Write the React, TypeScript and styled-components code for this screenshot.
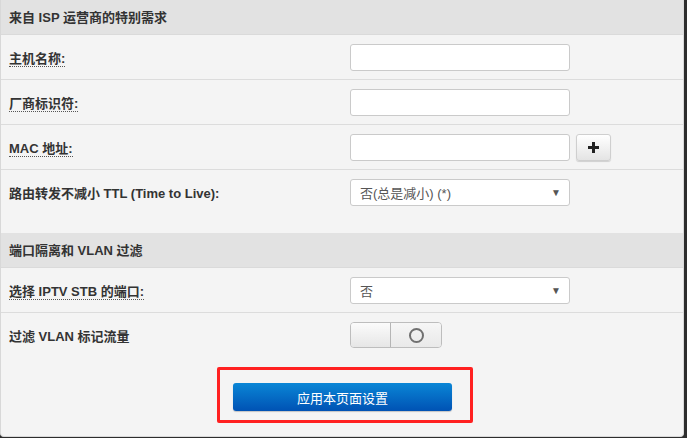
import React from "react";
import styled, { createGlobalStyle } from "styled-components";

const Global = createGlobalStyle`
  html, body { margin: 0; padding: 0; background: #2d2d2d; }
  body { font-family: "Liberation Sans", "Noto Sans CJK SC", sans-serif; font-size: 13px; color: #333; }
`;

const Panel = styled.div`
  width: 684px;
  height: 437px;
  box-sizing: border-box;
  background: #f4f4f4;
  border: 1px solid #d8d8d8;
  border-top: none;
  border-radius: 0 0 4px 4px;
  overflow: hidden;
`;

const SectionHeader = styled.div`
  height: 35px;
  box-sizing: border-box;
  display: flex;
  align-items: center;
  padding: 0 8px 1px;
  background: #e2e2e2;
  font-weight: bold;
  color: #333;
  border-bottom: 1px solid #dadada;
`;

const Row = styled.div<{ $extra?: number; $last?: boolean }>`
  display: grid;
  grid-template-columns: 341px 1fr;
  align-items: start;
  padding: 9px 8px ${(p) => 8 + (p.$extra ?? 0)}px;
  border-bottom: ${(p) => (p.$last ? "none" : "1px solid #dcdcdc")};
`;

const LabelCell = styled.div`
  height: 27px;
  display: flex;
  align-items: center;
  font-weight: bold;
`;

const Hint = styled.span`
  border-bottom: 1px dotted #555;
  line-height: 15px;
  padding-top: 2px;
`;

const Controls = styled.div`
  display: flex;
  gap: 6px;
  align-items: center;
`;

const TextInput = styled.input`
  width: 220px;
  height: 27px;
  box-sizing: border-box;
  border: 1px solid #cacaca;
  border-radius: 3px;
  background: #fff;
  padding: 0 8px;
  font: inherit;
`;

const SelectBox = styled.div`
  width: 220px;
  height: 27px;
  box-sizing: border-box;
  border: 1px solid #cacaca;
  border-radius: 3px;
  background: #fff;
  display: flex;
  align-items: center;
  justify-content: space-between;
  padding: 0 8px 0 9px;
  color: #555;
`;

const Arrow = styled.span`
  font-size: 10px;
  color: #555;
`;

const PlusButton = styled.button`
  width: 35px;
  height: 27px;
  box-sizing: border-box;
  border: 1px solid #cfcfcf;
  border-radius: 3px;
  background: linear-gradient(#ffffff, #e4e4e4);
  box-shadow: 0 1px 1px rgba(0, 0, 0, 0.15);
  display: flex;
  align-items: center;
  justify-content: center;
  padding: 0;
`;

const Toggle = styled.div`
  width: 92px;
  height: 26px;
  box-sizing: border-box;
  border: 1px solid #bdbdbd;
  border-radius: 4px;
  display: flex;
  overflow: hidden;
`;

const ToggleKnob = styled.div`
  width: 39px;
  background: linear-gradient(#fbfbfb, #e6e6e6);
  border-right: 1px solid #b5b5b5;
  box-shadow: 1px 0 2px rgba(0, 0, 0, 0.12);
`;

const ToggleTrack = styled.div`
  flex: 1;
  background: linear-gradient(#f6f6f6, #e9e9e9);
  display: flex;
  align-items: center;
  justify-content: center;
`;

const Ring = styled.span`
  width: 11px;
  height: 11px;
  border: 2px solid #707070;
  border-radius: 50%;
`;

const Footer = styled.div`
  display: flex;
  padding: 10px 0 0 216px;
`;

const Highlight = styled.div`
  border: 3px solid #ff2020;
  border-radius: 2px;
  padding: 13px 18px 9px 13px;
`;

const ApplyButton = styled.button`
  width: 219px;
  height: 28px;
  border: none;
  border-radius: 3px;
  background: linear-gradient(#0a86d6, #0052b4);
  color: #fff;
  font: inherit;
  font-size: 13px;
  box-shadow: 0 1px 1px rgba(0, 0, 0, 0.2);
  padding: 0;
`;

export default function App() {
  return (
    <>
      <Global />
      <Panel>
        <SectionHeader>来自 ISP 运营商的特别需求</SectionHeader>
        <Row>
          <LabelCell><Hint>主机名称:</Hint></LabelCell>
          <Controls><TextInput /></Controls>
        </Row>
        <Row>
          <LabelCell><Hint>厂商标识符:</Hint></LabelCell>
          <Controls><TextInput /></Controls>
        </Row>
        <Row>
          <LabelCell><Hint>MAC 地址:</Hint></LabelCell>
          <Controls>
            <TextInput />
            <PlusButton>
              <svg width="11" height="11" viewBox="0 0 11 11">
                <path d="M4 0h3v4h4v3H7v4H4V7H0V4h4z" fill="#222" />
              </svg>
            </PlusButton>
          </Controls>
        </Row>
        <Row $extra={19} $last>
          <LabelCell>路由转发不减小 TTL (Time to Live):</LabelCell>
          <Controls>
            <SelectBox>
              <span>否(总是减小) (*)</span>
              <Arrow>▼</Arrow>
            </SelectBox>
          </Controls>
        </Row>
        <SectionHeader>端口隔离和 VLAN 过滤</SectionHeader>
        <Row>
          <LabelCell><Hint>选择 IPTV STB 的端口:</Hint></LabelCell>
          <Controls>
            <SelectBox>
              <span>否</span>
              <Arrow>▼</Arrow>
            </SelectBox>
          </Controls>
        </Row>
        <Row $last>
          <LabelCell>过滤 VLAN 标记流量</LabelCell>
          <Controls>
            <Toggle>
              <ToggleKnob />
              <ToggleTrack><Ring /></ToggleTrack>
            </Toggle>
          </Controls>
        </Row>
        <Footer>
          <Highlight>
            <ApplyButton>应用本页面设置</ApplyButton>
          </Highlight>
        </Footer>
      </Panel>
    </>
  );
}
